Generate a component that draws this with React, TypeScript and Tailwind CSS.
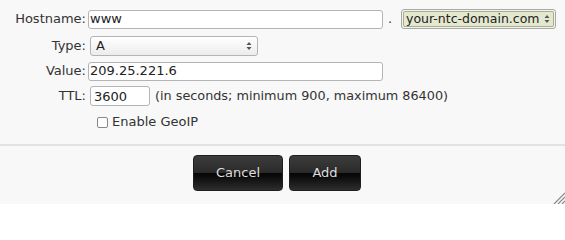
function Arrows() {
  return (
    <svg width="6" height="10" viewBox="0 0 6 10" className="shrink-0">
      <path d="M3 1 L5.5 4 L0.5 4 Z" fill="#555" />
      <path d="M3 9 L5.5 6 L0.5 6 Z" fill="#555" />
    </svg>
  )
}

function Label({ text }: { text: string }) {
  return <span className="w-[88px] shrink-0 pr-[2px] text-right">{text}</span>
}

export default function App() {
  return (
    <div
      className="relative w-[565px] h-[204px] overflow-hidden bg-[#f8f8f8] text-[13px] text-[#333]"
      style={{ fontFamily: '"DejaVu Sans", Verdana, sans-serif' }}
    >
      <div className="pt-[8px] flex h-[30px] items-center">
        <Label text="Hostname:" />
        <input
          defaultValue="www"
          className="h-[19px] w-[295px] rounded-[3px] border border-[#b4b4b4] bg-white px-[1px] text-[13px] text-[#222] outline-none"
        />
        <span className="ml-[5px] w-[13px]">.</span>
        <div className="flex h-[20px] w-[155px] items-center rounded-[3px] border border-[#a9a9a9] bg-[#f2f2f2] p-[1px]">
          <div className="flex h-full flex-1 items-center justify-between whitespace-nowrap rounded-[2px] border border-[#a8b088] bg-[#e4e8cf] pl-[2px] pr-[3px] text-[12.5px] text-[#222]">
            <span>your-ntc-domain.com</span>
            <Arrows />
          </div>
        </div>
      </div>

      <div className="mt-[5px] flex h-[22px] items-center">
        <Label text="Type:" />
        <div className="ml-[2px] flex h-[20px] w-[168px] items-center justify-between rounded-[3px] border border-[#b4b4b4] bg-gradient-to-b from-white to-[#ececec] pl-[5px] pr-[5px] text-[#222]">
          <span>A</span>
          <Arrows />
        </div>
      </div>

      <div className="mt-[3px] flex h-[22px] items-center">
        <Label text="Value:" />
        <input
          defaultValue="209.25.221.6"
          className="h-[19px] w-[295px] rounded-[3px] border border-[#b4b4b4] bg-white px-[1px] text-[13px] text-[#222] outline-none"
        />
      </div>

      <div className="mt-[3px] flex h-[22px] items-center">
        <Label text="TTL:" />
        <input
          defaultValue="3600"
          className="ml-[2px] h-[20px] w-[60px] rounded-[3px] border border-[#b4b4b4] bg-white px-[3px] text-[13px] text-[#222] outline-none"
        />
        <span className="ml-[5px] text-[12.8px]">(in seconds; minimum 900, maximum 86400)</span>
      </div>

      <div className="mt-[4px] flex h-[22px] items-center pl-[97px]">
        <span className="h-[11px] w-[11px] rounded-[2px] border border-[#888] bg-white" />
        <span className="ml-[4px]">Enable GeoIP</span>
      </div>

      <div className="mt-[11px] h-[2px] bg-[#e2e2e2]" />

      <div className="mt-[9px] flex gap-[6px] pl-[193px]">
        <button className="relative h-[36px] w-[90px] overflow-hidden rounded-[4px] border border-[#1e1e1e] bg-gradient-to-b from-[#3c3c3c] via-[#2a2a2a] to-[#2a2a2a] text-[13px] text-[#ddd]">
          <span className="absolute inset-x-0 bottom-0 h-1/2 bg-gradient-to-b from-[#050505] to-[#2e2e2e]" />
          <span className="relative">Cancel</span>
        </button>
        <button className="relative h-[36px] w-[72px] overflow-hidden rounded-[4px] border border-[#1e1e1e] bg-gradient-to-b from-[#3c3c3c] via-[#2a2a2a] to-[#2a2a2a] text-[13px] text-[#ddd]">
          <span className="absolute inset-x-0 bottom-0 h-1/2 bg-gradient-to-b from-[#050505] to-[#2e2e2e]" />
          <span className="relative">Add</span>
        </button>
      </div>

      <svg width="12" height="12" viewBox="0 0 12 12" className="absolute bottom-0 right-0">
        <path d="M12 1 L1 12 M12 5 L5 12 M12 9 L9 12" stroke="#888" strokeWidth="1.2" />
      </svg>
    </div>
  )
}
